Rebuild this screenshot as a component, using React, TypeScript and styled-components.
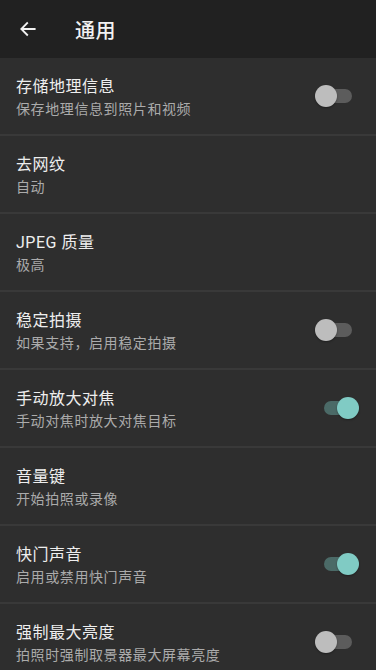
import React, { useState } from 'react';

import styled, { createGlobalStyle } from 'styled-components';

const GlobalStyle = createGlobalStyle`
  html, body {
    margin: 0;
    padding: 0;
    background: #2e2e2e;
  }

  body {
    font-family: Roboto, "Noto Sans CJK SC", "Noto Sans", sans-serif;
    -webkit-font-smoothing: antialiased;
  }
`;

interface SettingItem {
  id: string;
  title: string;
  summary: string;
  toggle?: boolean;
}

const SETTINGS: SettingItem[] = [
  { id: 'geo', title: '存储地理信息', summary: '保存地理信息到照片和视频', toggle: false },
  { id: 'moire', title: '去网纹', summary: '自动' },
  { id: 'jpeg', title: 'JPEG 质量', summary: '极高' },
  { id: 'stab', title: '稳定拍摄', summary: '如果支持，启用稳定拍摄', toggle: false },
  { id: 'zoom', title: '手动放大对焦', summary: '手动对焦时放大对焦目标', toggle: true },
  { id: 'volume', title: '音量键', summary: '开始拍照或录像' },
  { id: 'shutter', title: '快门声音', summary: '启用或禁用快门声音', toggle: true },
  { id: 'bright', title: '强制最大亮度', summary: '拍照时强制取景器最大屏幕亮度', toggle: false },
];

const Page = styled.div`
  width: 376px;
  min-height: 670px;
  background: #2e2e2e;
  display: flex;
  flex-direction: column;
`;

const Toolbar = styled.header`
  height: 58px;
  background: #212121;
  display: flex;
  align-items: center;
  padding: 0 0 0 16px;
  box-sizing: border-box;
  flex-shrink: 0;
`;

const BackButton = styled.button`
  width: 24px;
  height: 24px;
  padding: 0;
  border: none;
  background: transparent;
  display: flex;
  align-items: center;
  justify-content: center;
  cursor: pointer;
`;

const ToolbarTitle = styled.h1`
  margin: 0 0 0 35px;
  font-size: 20px;
  font-weight: 500;
  color: #f2f2f2;
  letter-spacing: 0.5px;
`;

const List = styled.ul`
  list-style: none;
  margin: 0;
  padding: 0;
`;

const Row = styled.li`
  height: 78px;
  box-sizing: border-box;
  padding: 0 18px 0 16px;
  display: flex;
  align-items: center;
  border-bottom: 2px solid #393939;
`;

const Texts = styled.div`
  flex: 1;
  display: flex;
  flex-direction: column;
  gap: 3px;
  padding-top: 3px;
`;

const Title = styled.div`
  font-size: 16px;
  line-height: 20px;
  letter-spacing: 0.5px;
  color: #eeeeee;
`;

const Summary = styled.div`
  font-size: 14px;
  line-height: 18px;
  letter-spacing: 0.6px;
  color: #ababab;
`;

const SwitchTrack = styled.button<{ $on: boolean }>`
  position: relative;
  width: 34px;
  height: 14px;
  border-radius: 7px;
  border: none;
  padding: 0;
  margin-right: ${(p) => (p.$on ? '0' : '6px')};
  background: ${(p) => (p.$on ? '#4b6a67' : '#5c5c5c')};
  cursor: pointer;
  flex-shrink: 0;
`;

const SwitchThumb = styled.span<{ $on: boolean }>`
  position: absolute;
  top: -4px;
  left: ${(p) => (p.$on ? '13px' : '-3px')};
  width: 22px;
  height: 22px;
  border-radius: 50%;
  background: ${(p) => (p.$on ? '#80cbc4' : '#bdbdbd')};
  box-shadow: 0 1px 2px rgba(0, 0, 0, 0.35);
`;

const ArrowBack = () => (
  <svg width='20' height='20' viewBox='0 0 24 24' fill='none'>
    <path d='M20 12H4.5M11 5l-7 7 7 7' stroke='#f2f2f2' strokeWidth='2.2' strokeLinecap='square' />
  </svg>
);

const App = () => {
  const [values, setValues] = useState<Record<string, boolean>>(() =>
    Object.fromEntries(SETTINGS.filter((s) => s.toggle !== undefined).map((s) => [s.id, !!s.toggle])),
  );

  return (
    <Page>
      <GlobalStyle />
      <Toolbar>
        <BackButton aria-label='back'>
          <ArrowBack />
        </BackButton>
        <ToolbarTitle>通用</ToolbarTitle>
      </Toolbar>
      <List>
        {SETTINGS.map((item) => (
          <Row key={item.id}>
            <Texts>
              <Title>{item.title}</Title>
              <Summary>{item.summary}</Summary>
            </Texts>
            {item.toggle !== undefined && (
              <SwitchTrack
                $on={values[item.id]}
                onClick={() => setValues((prev) => ({ ...prev, [item.id]: !prev[item.id] }))}
              >
                <SwitchThumb $on={values[item.id]} />
              </SwitchTrack>
            )}
          </Row>
        ))}
      </List>
    </Page>
  );
};

export default App;
